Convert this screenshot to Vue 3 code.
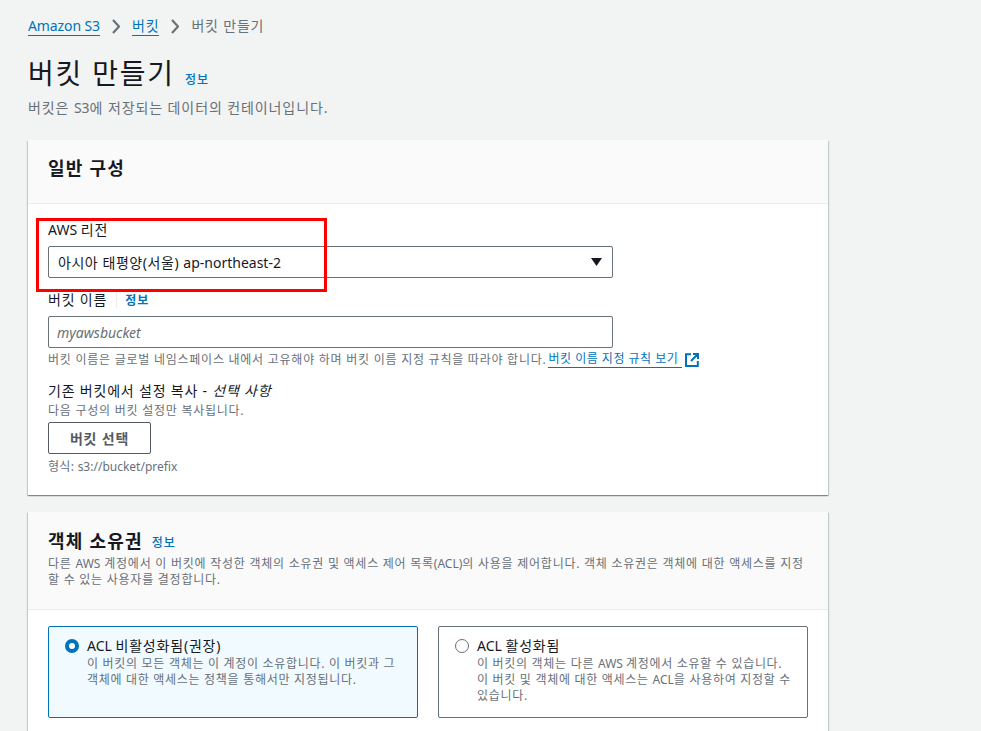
<script setup>
const radios = [
  { title: [['lat', 'ACL '], ['', '비활성화됨(권장)']], key: 'a', lines: [[['', '이 버킷의 모든 객체는 이 계정이 소유합니다. 이 버킷과 그']], [['', '객체에 대한 액세스는 정책을 통해서만 지정됩니다.']]], on: true },
  { title: [['lat', 'ACL '], ['', '활성화됨']], key: 'b', lines: [[['', '이 버킷의 객체는 다른 '], ['lat', 'AWS '], ['', '계정에서 소유할 수 있습니다.']], [['', '이 버킷 및 객체에 대한 액세스는 '], ['lat', 'ACL'], ['', '을 사용하여 지정할 수']], [['', '있습니다.']]], on: false },
]
</script>

<template>
  <div class="page">
    <nav class="crumbs">
      <a class="crumb-link lat amazon">Amazon S3</a>
      <svg class="chev" width="8" height="15" viewBox="0 0 8 15"><path d="M1 1l6 6.5-6 6.5" fill="none" stroke="#687078" stroke-width="2.2"/></svg>
      <a class="crumb-link">버킷</a>
      <svg class="chev" width="8" height="15" viewBox="0 0 8 15"><path d="M1 1l6 6.5-6 6.5" fill="none" stroke="#687078" stroke-width="2.2"/></svg>
      <span class="crumb-cur">버킷 만들기</span>
    </nav>

    <header class="head">
      <h1>버킷 만들기</h1>
      <span class="info info-h1">정보</span>
    </header>
    <p class="sub">버킷은 <span class="lat">S3</span>에 저장되는 데이터의 컨테이너입니다.</p>

    <section class="card card-one">
      <div class="card-head head-one"><h2>일반 구성</h2></div>
      <div class="body-one">
        <label class="lbl"><span class="lat">AWS </span>리전</label>
        <div class="field select">
          <span class="select-text">아시아 태평양(서울) <span class="lat">ap-northeast-2</span></span>
          <svg class="caret" width="11" height="8" viewBox="0 0 11 8"><path d="M0 0h11L5.5 8z" fill="#16191f"/></svg>
        </div>
        <div class="name-row">
          <label class="lbl">버킷 이름</label>
          <span class="divider"></span>
          <span class="info info-name">정보</span>
        </div>
        <div class="field input"><em class="lat">myawsbucket</em></div>
        <p class="hint hint-name">
          <span>버킷 이름은 글로벌 네임스페이스 내에서 고유해야 하며 버킷 이름 지정 규칙을 따라야 합니다.</span>
          <a class="ext-link">버킷 이름 지정 규칙 보기&nbsp;</a>
          <svg class="ext" width="14" height="14" viewBox="0 0 14 14"><path d="M6 1.2H1v11.8h11.8V8M8 1h5v5M13 1L6 8" fill="none" stroke="#0073bb" stroke-width="2"/></svg>
        </p>
        <p class="lbl copy-lbl">기존 버킷에서 설정 복사 - <em>선택 사항</em></p>
        <p class="hint copy-hint">다음 구성의 버킷 설정만 복사됩니다.</p>
        <button class="btn">버킷 선택</button>
        <p class="hint fmt">형식: <span class="lat">s3://bucket/prefix</span></p>
      </div>
      <div class="redbox"></div>
    </section>

    <section class="card card-two">
      <div class="card-head head-two">
        <div class="title-row"><h2>객체 소유권</h2><span class="info">정보</span></div>
        <p class="desc">다른 <span class="lat">AWS</span> 계정에서 이 버킷에 작성한 객체의 소유권 및 액세스 제어 목록<span class="lat">(ACL)</span>의 사용을 제어합니다. 객체 소유권은 객체에 대한 액세스를 지정</p>
        <p class="desc desc-2">할 수 있는 사용자를 결정합니다.</p>
      </div>
      <div class="radios">
        <div v-for="r in radios" :key="r.key" class="radio" :class="{ on: r.on }">
          <span class="dot"></span>
          <div>
            <div class="r-title"><span v-for="(s, i) in r.title" :key="i" :class="s[0]">{{ s[1] }}</span></div>
            <div v-for="(l, j) in r.lines" :key="j" class="r-line"><span v-for="(s, i) in l" :key="i" :class="s[0]">{{ s[1] }}</span></div>
          </div>
        </div>
      </div>
    </section>
  </div>
</template>

<style>
html, body { margin: 0; background: #f2f3f3; overflow: hidden; }
</style>

<style scoped>
.page {
  height: 731px;
  overflow: hidden;
  box-sizing: border-box;
  padding: 16px 0 0 28px;
  background: #f2f3f3;
  font-family: "Noto Sans", "Noto Sans CJK KR", sans-serif;
  color: #16191f;
  font-size: 14px;
  letter-spacing: .8px;
}
.lat { letter-spacing: 0; }
p, h1, h2 { margin: 0; font-weight: 400; }
.crumbs { display: flex; align-items: center; height: 20px; line-height: 20px; }
.crumb-link { color: #0073bb; border-bottom: 1px solid #0073bb; line-height: 18px; }
.amazon { letter-spacing: -.1px; }
.chev { margin: 0 12px; }
.crumb-cur { color: #687078; }
.head { display: flex; align-items: flex-end; margin-top: 17px; height: 40px; }
h1 { font-size: 28px; line-height: 40px; letter-spacing: 1.8px; }
.info { color: #0073bb; font-size: 12px; font-weight: 500; line-height: 16px; letter-spacing: 1px; }
.info-h1 { margin: 0 0 5px 10px; }
.info-name { margin-top: 2px; font-weight: 700; }
.sub { color: #687078; line-height: 20px; margin-top: 5px; letter-spacing: .9px; }
.card {
  position: relative;
  width: 800px;
  background: #fff;
  box-shadow: 0 1px 1px 0 rgba(0, 28, 36, .3), 1px 1px 1px 0 rgba(0, 28, 36, .15), -1px 1px 1px 0 rgba(0, 28, 36, .15);
}
.card-one { margin-top: 22px; height: 355px; }
.card-two { margin-top: 17px; height: 300px; }
.card-head { background: #fafafa; border-bottom: 1px solid #eaeded; box-sizing: border-box; padding: 0 20px; }
.head-one { height: 64px; padding-top: 16px; }
.head-two { height: 98px; padding-top: 17px; }
h2 { font-size: 18px; font-weight: 700; line-height: 24px; letter-spacing: 1.2px; }
.body-one { padding: 16px 20px 0; }
.lbl { display: block; line-height: 20px; }
.field {
  box-sizing: border-box;
  width: 565px;
  height: 32px;
  border: 1px solid #687078;
  border-radius: 2px;
  display: flex;
  align-items: center;
  justify-content: space-between;
  padding: 0 9px;
  background: #fff;
}
.select { margin-top: 6px; padding-right: 10px; }
.select-text { letter-spacing: .55px; }
.name-row { display: flex; align-items: center; height: 20px; margin-top: 12px; }
.divider { width: 1px; height: 16px; background: #eaeded; margin: 0 8px 0 9px; }
.input { margin-top: 6px; padding: 0 8px; }
.input em { color: #687078; }
.hint { font-size: 12px; line-height: 16px; color: #687078; letter-spacing: .75px; }
.hint-name { margin-top: 3px; white-space: nowrap; display: flex; align-items: center; gap: 2px; }
.ext-link { color: #0073bb; border-bottom: 1px solid #0073bb; letter-spacing: .5px; }
.ext { margin-left: 1px; }
.copy-lbl { margin-top: 13px; }
.copy-hint { margin-top: 2px; }
.btn {
  display: block;
  box-sizing: border-box;
  width: 103px;
  height: 32px;
  margin-top: 3px;
  background: #fff;
  border: 1px solid #545b64;
  border-radius: 2px;
  color: #545b64;
  font: 700 14px "Noto Sans", "Noto Sans CJK KR", sans-serif;
  letter-spacing: .8px;
  padding: 0;
}
.fmt { margin-top: 5px; letter-spacing: .3px; }
.redbox {
  position: absolute;
  left: 8px;
  top: 78px;
  width: 291px;
  height: 74px;
  box-sizing: border-box;
  border: 3px solid #f00;
}
.title-row { display: flex; align-items: center; gap: 9px; }
.title-row .info { margin-top: 3px; }
.desc { font-size: 12px; line-height: 16px; color: #687078; margin-top: 3px; letter-spacing: .75px; white-space: nowrap; }
.desc-2 { margin-top: 0; }
.radios { display: grid; grid-template-columns: 370px 370px; gap: 20px; padding: 16px 20px; }
.radio {
  box-sizing: border-box;
  height: 92px;
  border: 1px solid #687078;
  border-radius: 2px;
  padding: 9px 16px;
  display: flex;
  gap: 8px;
}
.radio.on { border-color: #0073bb; background: #f1faff; }
.dot {
  flex: none;
  box-sizing: border-box;
  width: 14px;
  height: 14px;
  margin-top: 3px;
  border-radius: 50%;
  border: 1px solid #687078;
  background: #fff;
}
.on .dot { border: 4px solid #0073bb; }
.r-title { line-height: 20px; }
.r-line { font-size: 12px; line-height: 16px; color: #687078; letter-spacing: .7px; }
</style>
